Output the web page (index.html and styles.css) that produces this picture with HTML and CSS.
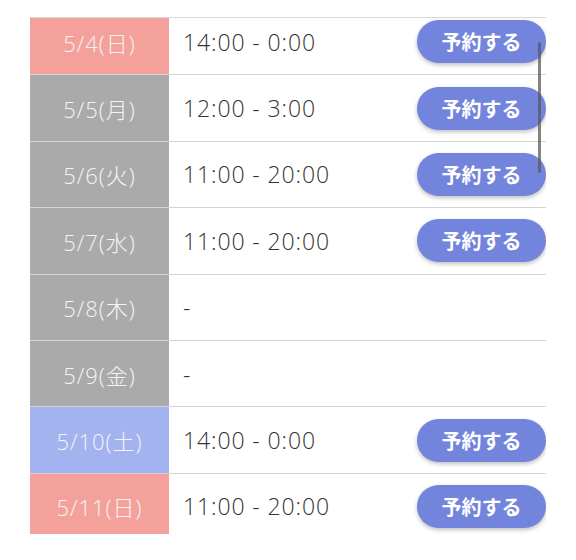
FILE: index.html
```html
<!DOCTYPE html>
<html lang="ja">
<head>
<meta charset="utf-8">
<link rel="stylesheet" href="styles.css">
</head>
<body>
<div class="frame">
  <div class="list">
    <div class="row"><div class="date sun">5/4(日)</div><div class="time">14:00 - 0:00</div><button class="reserve">予約する</button></div>
    <div class="row"><div class="date off">5/5(月)</div><div class="time">12:00 - 3:00</div><button class="reserve">予約する</button></div>
    <div class="row"><div class="date off">5/6(火)</div><div class="time">11:00 - 20:00</div><button class="reserve">予約する</button></div>
    <div class="row"><div class="date off">5/7(水)</div><div class="time">11:00 - 20:00</div><button class="reserve">予約する</button></div>
    <div class="row"><div class="date off">5/8(木)</div><div class="time">-</div></div>
    <div class="row"><div class="date off">5/9(金)</div><div class="time">-</div></div>
    <div class="row"><div class="date sat">5/10(土)</div><div class="time">14:00 - 0:00</div><button class="reserve">予約する</button></div>
    <div class="row"><div class="date sun">5/11(日)</div><div class="time">11:00 - 20:00</div><button class="reserve">予約する</button></div>
  </div>
  <div class="scrollbar"></div>
</div>
</body>
</html>
```

FILE: styles.css
```css
html, body {
  margin: 0;
  padding: 0;
  background: #ffffff;
}
body {
  font-family: "Open Sans", "Noto Sans CJK JP", sans-serif;
}
.frame {
  position: relative;
  margin: 17px 0 0 30px;
  width: 516px;
  height: 517px;
  border-top: 1px solid #d8d8d8;
  overflow: hidden;
  box-sizing: border-box;
}
.list {
  margin-top: -9px;
}
.row {
  display: grid;
  grid-template-columns: 139px 1fr auto;
  align-items: center;
  height: 66.4px;
  box-sizing: border-box;
  border-bottom: 1px solid #d4d4d4;
}
.date {
  height: 100%;
  display: flex;
  align-items: center;
  justify-content: center;
  color: #f4f4f4;
  font-size: 22px;
  font-weight: 300;
  letter-spacing: 1px;
}
.date.sun { background: #f4a19b; }
.date.off { background: #aaaaaa; }
.date.sat { background: #a3b3f0; }
.time {
  padding-left: 14px;
  color: #333333;
  font-size: 23px;
  font-weight: 300;
  letter-spacing: 0.9px;
}
.reserve {
  width: 129px;
  height: 43px;
  border: none;
  border-radius: 22px;
  background: #7384dc;
  color: #ffffff;
  font-family: "Noto Sans CJK JP", sans-serif;
  font-size: 20px;
  font-weight: 700;
  box-shadow: 0 2px 4px rgba(0, 0, 0, 0.25);
  padding: 0;
}
.scrollbar {
  position: absolute;
  left: 508px;
  top: 24px;
  width: 3px;
  height: 131px;
  border-radius: 2px;
  background: rgba(90, 90, 90, 0.75);
}
```
